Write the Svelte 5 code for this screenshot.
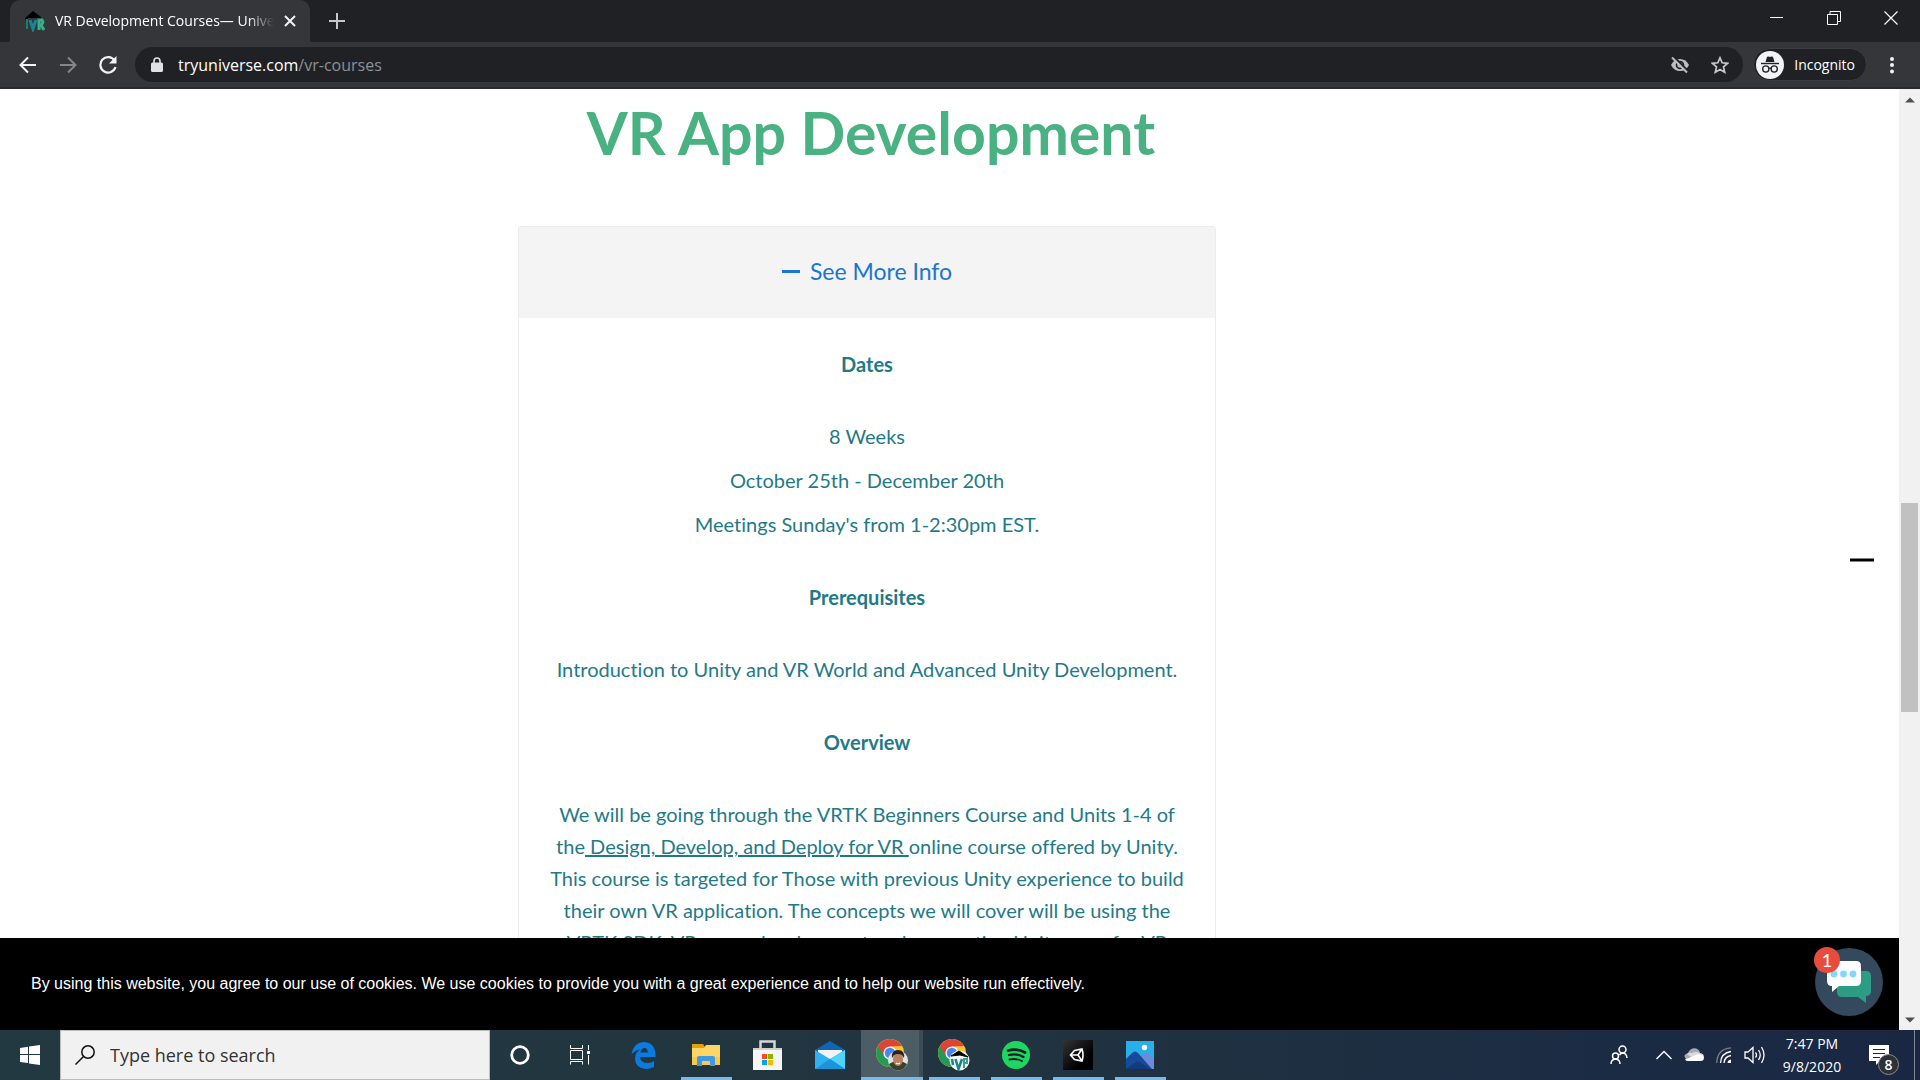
<script lang="ts">
	let infoOpen = $state(true);
	let query = $state('');

	const dates = ['8 Weeks', 'October 25th - December 20th', "Meetings Sunday's from 1-2:30pm EST."];

	// Pinned and running taskbar apps
	const apps = [
		{ name: 'Edge', running: false, active: false },
		{ name: 'File Explorer', running: true, active: false },
		{ name: 'Store', running: false, active: false },
		{ name: 'Mail', running: false, active: false },
		{ name: 'Chrome', running: true, active: true },
		{ name: 'Chrome VR', running: true, active: false },
		{ name: 'Spotify', running: true, active: false },
		{ name: 'Unity', running: true, active: false },
		{ name: 'Photos', running: true, active: false }
	];
</script>

{#snippet chromeLogo()}
	<circle cx="14" cy="14" r="14" fill="#fbc52f" />
	<path d="M1.9 7A14 14 0 0 0 14 28l6-10.500-6-3.500z" fill="#219b55" />
	<path d="M1.900 7 8 17.500 14 7.500 26.100 7A14 14 0 0 0 1.900 7z" fill="#db4437" />
	<circle cx="14" cy="14" r="6.600" fill="#f4f4f4" />
	<circle cx="14" cy="14" r="5.200" fill="#4687f4" />
{/snippet}

<div class="screen">
	<header class="browser">
		<div class="tabstrip">
			<div class="tab">
				<svg class="favicon" width="20" height="22" viewBox="0 0 20 22">
					<path d="M0 8 8 1l8 6v3H13V8H3v3H1z" fill="#000" />
					<path d="M2 9v10" stroke="#16806f" stroke-width="2" />
					<path d="M5 10l3 9 3-9" fill="none" stroke="#1c8296" stroke-width="3" />
					<path d="M14 20V10h3q2 3-1 5l3 5" fill="none" stroke="#35b183" stroke-width="3" />
				</svg>
				<span class="tab-title">VR Development Courses— Universe</span>
				<button class="plain" aria-label="Close tab">
					<svg width="12" height="12" viewBox="0 0 12 12"><path d="M1 1l10 10M11 1 1 11" stroke="#f1f3f4" stroke-width="2" /></svg>
				</button>
			</div>
			<button class="plain new-tab" aria-label="New tab">
				<svg width="16" height="16" viewBox="0 0 16 16"><path d="M8 0v16M0 8h16" stroke="#c5c8cb" stroke-width="2" /></svg>
			</button>
			<div class="window-buttons">
				<button class="plain" aria-label="Minimize">
					<svg width="14" height="14" viewBox="0 0 14 14"><path d="M0 6.500h13" stroke="#fff" /></svg>
				</button>
				<button class="plain" aria-label="Restore">
					<svg width="14" height="14" viewBox="0 0 14 14" fill="none" stroke="#fff"><path d="M.5 3.500h10v10H.5zM3 3V.5h10.500v10H11" /></svg>
				</button>
				<button class="plain" aria-label="Close">
					<svg width="14" height="14" viewBox="0 0 14 14"><path d="M.5.5l13 13M13.500.5l-13 13" stroke="#fff" stroke-width="1.200" /></svg>
				</button>
			</div>
		</div>

		<div class="toolbar">
			<nav class="nav-buttons">
				<button class="plain" aria-label="Back">
					<svg width="18" height="18" viewBox="0 0 18 18" fill="none" stroke="#f1f3f4" stroke-width="2"><path d="M17 9H2M9 1.500 1.500 9 9 16.500" /></svg>
				</button>
				<button class="plain" aria-label="Forward">
					<svg width="18" height="18" viewBox="0 0 18 18" fill="none" stroke="#84868a" stroke-width="2"><path d="M1 9h15M9 1.500 16.500 9 9 16.500" /></svg>
				</button>
				<button class="plain" aria-label="Reload">
					<svg width="18" height="18" viewBox="0 0 18 18"><path d="M15.500 4.500A7.700 7.700 0 1 0 16.500 11" fill="none" stroke="#f1f3f4" stroke-width="2.200" /><path d="M17.500 0v7.500H10z" fill="#f1f3f4" /></svg>
				</button>
			</nav>
			<div class="omnibox">
				<svg width="12" height="16" viewBox="0 0 12 16"><path d="M3 6V4a3 3 0 0 1 6 0v2" fill="none" stroke="#dfe1e5" stroke-width="1.600" /><rect x="0" y="5.500" width="12" height="9.500" rx="1.500" fill="#dfe1e5" /></svg>
				<span class="url">tryuniverse.com<span class="path">/vr-courses</span></span>
				<div class="page-actions">
					<button class="plain" aria-label="Third-party cookies blocked">
						<svg width="20" height="18" viewBox="0 0 20 18"><path d="M1 9Q4 3 10 3t9 6q-3 6-9 6T1 9z" fill="#bcbec1" /><circle cx="10" cy="9" r="4.300" fill="#202124" /><circle cx="10" cy="9" r="2.600" fill="#bcbec1" /><path d="M3.500.5l15 15" stroke="#202124" stroke-width="2" /><path d="M2 1.500l15 15" stroke="#bcbec1" stroke-width="2" /></svg>
					</button>
					<button class="plain" aria-label="Bookmark this page">
						<svg width="18" height="18" viewBox="0 0 18 18"><path d="M9 1.800l2.200 5 5.400.5-4.100 3.600 1.200 5.300L9 13.400l-4.700 2.800 1.200-5.300L1.400 7.300l5.400-.5z" fill="none" stroke="#c5c7ca" stroke-width="1.700" /></svg>
					</button>
				</div>
			</div>
			<button class="incognito">
				<svg width="28" height="28" viewBox="0 0 28 28">
					<circle cx="14" cy="14" r="14" fill="#f1f3f4" />
					<path d="M9.500 11l1.300-4.500q.5-1.300 1.700-.9l1.500.4 1.500-.4q1.200-.4 1.700.9l1.300 4.500z" fill="#202124" />
					<path d="M5 12.500h18" stroke="#202124" stroke-width="1.400" />
					<g fill="none" stroke="#202124" stroke-width="1.300"><circle cx="9.800" cy="18" r="3.100" /><circle cx="18.200" cy="18" r="3.100" /><path d="M12.800 17.500q1.200-.8 2.400 0" /></g>
				</svg>
				Incognito
			</button>
			<button class="plain menu" aria-label="Menu">
				<svg width="4" height="18" viewBox="0 0 4 18" fill="#f1f3f4"><circle cx="2" cy="3" r="2" /><circle cx="2" cy="9" r="2" /><circle cx="2" cy="15.500" r="2" /></svg>
			</button>
		</div>
	</header>

	<div class="viewport">
		<div class="page">
			<main>
				<div class="column">
					<h1>VR App Development</h1>
					<section class="card">
						<button class="toggle" aria-expanded={infoOpen} onclick={() => (infoOpen = !infoOpen)}>
							<span class="dash"></span>
							See More Info
						</button>
						{#if infoOpen}
							<div class="info">
								<h2>Dates</h2>
								{#each dates as line}
									<p>{line}</p>
								{/each}
								<h2>Prerequisites</h2>
								<p>Introduction to Unity and VR World and Advanced Unity Development.</p>
								<h2>Overview</h2>
								<p>
									We will be going through the VRTK Beginners Course and Units 1-4 of the<a href="#course">&nbsp;Design, Develop, and Deploy for VR&nbsp;</a>online course offered by Unity. This course is targeted for Those with previous Unity experience to build their own VR application. The concepts we will cover will be using the VRTK SDK, VR game development and connecting Unity apps for VR
								</p>
							</div>
						{/if}
					</section>
				</div>
			</main>

			<span class="side-marker"></span>

			<div class="cookies">
				By using this website, you agree to our use of cookies. We use cookies to provide you with a great experience and to help our website run effectively.
			</div>

			<button class="chat" aria-label="Open chat">
				<svg width="68" height="68" viewBox="0 0 68 68">
					<circle cx="34" cy="34" r="34" fill="#34495e" />
					<path d="M28 23h23q5 0 5 5v15q0 5-5 5v7l-8-6H27q-5 0-5-5V28z" fill="#2c9c84" />
					<path d="M16 13h25q5 0 5 5v15q0 5-5 5H24l-7 6v-6q-5 0-5-5V17z" fill="#fff" />
					<g fill="#81d8fd"><circle cx="19" cy="26" r="3.400" /><circle cx="28.500" cy="26" r="3.400" /><circle cx="38" cy="26" r="3.400" /></g>
				</svg>
				<span class="badge">1</span>
			</button>
		</div>

		<div class="scrollbar">
			<svg width="10" height="6" viewBox="0 0 10 6"><path d="M0 5.500 5 .5l5 5z" fill="#505050" /></svg>
			<div class="track"><div class="thumb"></div></div>
			<svg width="10" height="6" viewBox="0 0 10 6"><path d="M0 .5l5 5 5-5z" fill="#505050" /></svg>
		</div>
	</div>

	<footer class="taskbar">
		<button class="plain start" aria-label="Start">
			<svg width="20" height="20" viewBox="0 0 20 20" fill="#fff"><path d="M0 3l8-1.200V9H0zM9 1.600 20 0v9H9zM0 10h8v8L0 17zM9 10h11v10L9 18.400z" /></svg>
		</button>
		<label class="search">
			<svg width="20" height="20" viewBox="0 0 20 20" fill="none" stroke="#111" stroke-width="1.500"><circle cx="13" cy="7" r="6.200" /><path d="M8.500 11.500.5 19.500" /></svg>
			<input type="text" aria-label="Search" placeholder="Type here to search" bind:value={query} />
		</label>
		<button class="plain shell" aria-label="Cortana">
			<svg width="20" height="20" viewBox="0 0 20 20"><circle cx="10" cy="10" r="8.300" fill="none" stroke="#fff" stroke-width="2.800" /></svg>
		</button>
		<button class="plain shell" aria-label="Task View">
			<svg width="20" height="20" viewBox="0 0 20 20" fill="none" stroke="#fff"><path d="M.5 0v3.500h12V0M.5 5.500h12v9H.5zM.5 19.500v-3h12v3M18.500 0v5M18.500 10v9.500" /><path d="M17 6h3v3h-3z" fill="#fff" stroke="none" /></svg>
		</button>

		<div class="apps">
			{#each apps as app}
				<button class="plain app" class:running={app.running} class:active={app.active} aria-label={app.name}>
					{#if app.name === 'Edge'}
						<svg width="28" height="28" viewBox="0 0 28 28"><path d="M1.500 13Q4 1 14.500 1 26 2 25.500 16H10q.5 6 8 6 4 0 6-2v6q-4 2-8 2Q5 27 5 17.500 5 11 11 8q-5 1-9.500 5zM10.300 11.500h7.500Q17.500 7 14.500 7t-4.200 4.500z" fill="#0a7be0" /></svg>
					{:else if app.name === 'File Explorer'}
						<svg width="28" height="24" viewBox="0 0 28 24"><path d="M0 1h11l2 3v4H0z" fill="#dfa00b" /><path d="M0 5h12l2-3h14v20H0z" fill="#ffd564" /><path d="M0 14h28v8H0z" fill="#fbc94a" /><path d="M5 15q0-2 2-2h14q2 0 2 2v8h-5v-5h-8v5H5z" fill="#3d9be5" /></svg>
					{:else if app.name === 'Store'}
						<svg width="30" height="30" viewBox="0 0 30 30"><path d="M7.500 10V1.500h14V10" fill="none" stroke="#d6d6d8" stroke-width="2.500" /><path d="M0 8h29v22H0z" fill="#f5f5f5" /><path d="M0 8h29v2H0z" fill="#d4cfd0" /><path d="M9 14h5v5H9z" fill="#f25022" /><path d="M15 14h5v5h-5z" fill="#7fba00" /><path d="M9 20h5v5H9z" fill="#00a4ef" /><path d="M15 20h5v5h-5z" fill="#ffb900" /></svg>
					{:else if app.name === 'Mail'}
						<svg width="30" height="28" viewBox="0 0 30 28"><path d="M0 9 15 0l15 9v6H0z" fill="#0e65b5" /><path d="M3 9h24v11H3z" fill="#f3f3f3" /><path d="M0 9l15 9 15-9v19H0z" fill="#30b1ef" /><path d="M15 18 30 9v19z" fill="#50d4fc" /><path d="M0 28l15-10 15 10z" fill="#1c93dc" /></svg>
					{:else if app.name === 'Chrome'}
						<svg width="32" height="32" viewBox="0 0 32 32">
							{@render chromeLogo()}
							<circle cx="22" cy="21.500" r="10" fill="#e3e3df" />
							<path d="M13 25q4-3 9-3t9 3q-3 6.500-9 6.500T13 25z" fill="#37452f" />
							<ellipse cx="22" cy="20" rx="5" ry="7" fill="#b98264" />
							<path d="M16 19q-1-8 6-8t6 8l-2-3q-4-2-8 0z" fill="#2c211e" />
							<path d="M20 24q2 1.500 4 0" stroke="#fff" stroke-width="1.200" fill="none" />
						</svg>
					{:else if app.name === 'Chrome VR'}
						<svg width="32" height="32" viewBox="0 0 32 32">
							{@render chromeLogo()}
							<circle cx="21.500" cy="21.500" r="10" fill="#f6f8f8" />
							<path d="M13 17l8-5 9 6-4-1-4-1z" fill="#000" stroke="#000" />
							<path d="M14 20l1 6M17.500 20l3 10L24 20" fill="none" stroke="#18858b" stroke-width="2.500" />
							<path d="M26 29v-9h3v4h-3" fill="none" stroke="#35a48a" stroke-width="2" />
						</svg>
					{:else if app.name === 'Spotify'}
						<svg width="28" height="28" viewBox="0 0 28 28"><circle cx="14" cy="14" r="14" fill="#1ed760" /><g fill="none" stroke="#12202a" stroke-linecap="round"><path d="M6 9.500q9-2.500 17 2" stroke-width="2.800" /><path d="M7 14q8-2 14.500 2" stroke-width="2.300" /><path d="M7.500 18.500q7-1.500 12.500 1.500" stroke-width="1.900" /></g></svg>
					{:else if app.name === 'Unity'}
						<svg width="30" height="30" viewBox="0 0 30 30"><defs><linearGradient id="unity" x2="1" y2="1"><stop stop-color="#333" /><stop offset=".7" stop-color="#000" /></linearGradient></defs><path d="M0 0h30v30H0z" fill="url(#unity)" /><path d="M11.500 10.500 19 9q2 6 0 12l-7.500-1.500L7.500 15zM7.500 15H15l4-6M15 15l4 6" fill="none" stroke="#fff" stroke-width="1.600" /></svg>
					{:else}
						<svg width="28" height="28" viewBox="0 0 28 28"><path d="M0 0h28v28H0z" fill="#28b0e9" /><path d="M10 28V20l9-8q2-1 4 1l5 5v10z" fill="#6e8bd8" /><path d="M0 18l6-6q3-3 6 0l14 16H0z" fill="#174a98" /><path d="M0 28l10-7q2-1 4 0l10 7z" fill="#123b7e" /><circle cx="18.500" cy="6.500" r="2.700" fill="#fff" /></svg>
					{/if}
				</button>
			{/each}
		</div>

		<div class="tray">
			<button class="plain people" aria-label="People">
				<svg width="18" height="20" viewBox="0 0 18 20" fill="none" stroke="#fff" stroke-width="1.500"><circle cx="12.500" cy="4.500" r="3.500" /><circle cx="5.500" cy="11" r="3" /><path d="M1 19q0-4.500 4.500-5Q10 14.500 10 19M9.500 10q1.500-2 3-2 4 0 4.500 5" /></svg>
			</button>
			<button class="plain" aria-label="Show hidden icons">
				<svg width="16" height="10" viewBox="0 0 16 10"><path d="M.5 9 8 1.500 15.500 9" fill="none" stroke="#fff" stroke-width="1.400" /></svg>
			</button>
			<button class="plain" aria-label="OneDrive">
				<svg width="20" height="14" viewBox="0 0 20 14"><path d="M4 5q2-5 7-4.800 4 .8 5 4.300-5 3-7 6.500H2Q-2 7 4 5z" fill="#a6abb4" /><path d="M8 5q4-2 8 0 4 .5 4 4L10 11 3 6q2-2 5-1z" fill="#d7dade" /><path d="M1 11.500 13 6.500q4-1 7 3 0 3.500-3.500 3.500H4q-2 0-3-1.500z" fill="#fff" /></svg>
			</button>
			<button class="plain" aria-label="Network">
				<svg width="16" height="16" viewBox="0 0 16 16" fill="none" stroke-width="1.300"><path d="M.8 16Q1 2 15 .8" stroke="#78818f" /><path d="M4.500 16Q5 6 15 4.500M8 16q.5-6.500 7-7.500" stroke="#fff" /><path d="M11.500 16q0-3 3.500-3.500V16z" fill="#fff" /></svg>
			</button>
			<button class="plain" aria-label="Volume">
				<svg width="22" height="18" viewBox="0 0 22 18" fill="none" stroke="#fff" stroke-width="1.300"><path d="M1 6h3l5-4.500v15L4 12H1zM11.500 6.500q2 2.500 0 5M14.500 4q3.500 5 0 10M17.500 1q5 8 0 16" /></svg>
			</button>
			<div class="clock"><time>7:47 PM</time><time>9/8/2020</time></div>
			<button class="plain notices" aria-label="Notifications">
				<svg width="20" height="20" viewBox="0 0 20 20"><path d="M0 0h20v16h-9l-4 4v-4H0z" fill="#fff" /><path d="M4 4.500h12M4 8.500h12M4 12.500h7" stroke="#1b2944" /></svg>
				<span class="count">8</span>
			</button>
			<button class="plain desktop" aria-label="Show desktop"></button>
		</div>
	</footer>
</div>

<style>
	:global(body) {
		background: #fff;
	}

	.screen {
		height: 100vh;
		display: flex;
		flex-direction: column;
		overflow: hidden;
		font-family: 'Open Sans', 'Noto Sans', sans-serif;
	}

	.screen * {
		box-sizing: border-box;
	}

	svg {
		display: block;
		flex: none;
	}

	button {
		font-family: inherit;
		cursor: pointer;
	}

	.plain {
		display: flex;
		align-items: center;
		justify-content: center;
		padding: 0;
		border: 0;
		background: none;
	}

	/* Browser frame */
	.browser {
		flex: none;
		background: #35363a;
		border-bottom: 2px solid #28292c;
	}

	.tabstrip {
		display: flex;
		height: 42px;
		padding: 0 1px 0 10px;
		background: #202124;
	}

	.tab {
		display: flex;
		align-items: center;
		width: 300px;
		padding: 0 14px 0 15px;
		border-radius: 10px 10px 0 0;
		background: #35363a;
	}

	.tab-title {
		flex: 1;
		margin: 0 10px;
		padding-bottom: 2px;
		overflow: hidden;
		white-space: nowrap;
		font-size: 14px;
		color: #fff;
		mask-image: linear-gradient(to right, #000 88%, transparent);
	}

	.new-tab {
		width: 54px;
	}

	.window-buttons {
		display: flex;
		height: 36px;
		margin-left: auto;
	}

	.window-buttons button {
		width: 57px;
	}

	.toolbar {
		display: flex;
		align-items: center;
		height: 45px;
		padding-right: 3px;
	}

	.nav-buttons {
		display: flex;
		padding: 0 7px 0 8px;
	}

	.nav-buttons button {
		width: 40px;
		height: 36px;
	}

	.omnibox {
		flex: 1;
		display: flex;
		align-items: center;
		gap: 15px;
		height: 35px;
		padding: 0 14px 0 16px;
		border-radius: 18px;
		background: #202124;
	}

	.url {
		flex: 1;
		font-size: 16px;
		color: #fff;
	}

	.path {
		color: #8d9094;
	}

	.page-actions {
		display: flex;
		gap: 21px;
	}

	.incognito {
		display: flex;
		align-items: center;
		gap: 10px;
		height: 33px;
		margin-left: 10px;
		padding: 0 11px 0 2px;
		border: 1px solid #3c3d41;
		border-radius: 17px;
		background: #202124;
		color: #fff;
		font-size: 14px;
	}

	.menu {
		width: 50px;
		height: 36px;
	}

	/* Web page */
	.viewport {
		flex: 1;
		min-height: 0;
		display: flex;
	}

	.page {
		flex: 1;
		position: relative;
		overflow: hidden;
		font-family: Lato, sans-serif;
		font-variant-ligatures: none;
	}

	main {
		display: grid;
		grid-template-columns: 518fr 698fr 683fr;
	}

	.column {
		grid-column: 2;
		text-align: center;
	}

	h1 {
		margin: 0;
		padding: 8px 0 57px 8px;
		font-size: 59px;
		line-height: 72px;
		font-weight: 700;
		color: #49b182;
		white-space: nowrap;
	}

	.card {
		border: 1px solid #ececec;
		border-radius: 3px;
	}

	.toggle {
		display: flex;
		align-items: center;
		justify-content: center;
		gap: 10px;
		width: 100%;
		height: 91px;
		padding-bottom: 4px;
		border: 0;
		background: #f4f4f4;
		color: #1976d2;
		font-size: 23px;
	}

	.dash {
		width: 18px;
		height: 3px;
		background: #1976d2;
	}

	.info {
		padding: 30px 30px 0;
		color: #1f7a87;
		font-size: 20px;
		line-height: 32px;
	}

	.info h2 {
		margin: 0 0 40px;
		font-size: 20px;
		line-height: 32px;
		font-weight: 700;
	}

	.info p {
		margin: 0 0 12px;
	}

	.info p + h2 {
		margin-top: 41px;
	}

	.info a {
		color: inherit;
		text-decoration-thickness: 2px;
		text-underline-offset: 1px;
	}

	.side-marker {
		position: absolute;
		top: 50%;
		right: 25px;
		width: 24px;
		height: 3px;
		background: #000;
		transform: translateY(-50%);
	}

	.cookies {
		position: absolute;
		left: 0;
		right: 0;
		bottom: 0;
		padding: 34px 120px 34px 31px;
		background: #000;
		color: #fff;
		font-family: 'Liberation Sans', Arial, sans-serif;
		font-size: 16px;
		line-height: 24px;
	}

	.chat {
		position: absolute;
		right: 16px;
		bottom: 14px;
		padding: 0;
		border: 0;
		background: none;
	}

	.badge {
		position: absolute;
		top: -1px;
		left: -1px;
		width: 26px;
		height: 26px;
		border-radius: 50%;
		background: #e74c3c;
		color: #fff;
		font-size: 18px;
		line-height: 26px;
	}

	.scrollbar {
		flex: none;
		display: flex;
		flex-direction: column;
		align-items: center;
		gap: 7px;
		width: 21px;
		padding: 8px 0 7px;
		background: #f1f1f1;
	}

	.track {
		flex: 1;
		display: grid;
		grid-template-rows: 393fr 208fr 298fr;
	}

	.thumb {
		grid-row: 2;
		width: 17px;
		background: #c1c1c1;
	}

	/* Windows taskbar */
	.taskbar {
		flex: none;
		display: flex;
		height: 50px;
		background: linear-gradient(to right, #223941, #21343f 50%, #1c2c43 80%, #1a2743);
		color: #fff;
	}

	.start {
		width: 60px;
	}

	.search {
		display: flex;
		align-items: center;
		gap: 15px;
		width: 430px;
		padding: 0 14px;
		border: 1px solid #bcbcbc;
		background: #f1f1f1;
	}

	.search input {
		flex: 1;
		min-width: 0;
		padding: 0;
		border: 0;
		outline: 0;
		background: none;
		font-family: inherit;
		font-size: 18px;
		color: #222;
	}

	.search input::placeholder {
		color: #333;
		opacity: 1;
	}

	.shell {
		width: 60px;
	}

	.apps {
		display: flex;
		margin-left: 3px;
	}

	.app {
		position: relative;
		width: 62px;
	}

	.app.running::after {
		content: '';
		position: absolute;
		left: 6px;
		right: 5px;
		bottom: 0;
		height: 3px;
		background: #76b9ed;
	}

	.app.active {
		background: #4c5d66;
		box-shadow: inset -4px 0 #3d4c54;
	}

	.app.active::after {
		left: 0;
		right: 0;
	}

	.tray {
		display: flex;
		align-items: center;
		gap: 12px;
		margin-left: auto;
	}

	.people {
		margin-right: 16px;
	}

	.clock {
		display: flex;
		flex-direction: column;
		align-items: center;
		width: 68px;
		font-size: 14px;
		line-height: 23px;
	}

	.notices {
		position: relative;
		margin: 0 13px 0 11px;
	}

	.count {
		position: absolute;
		left: 9px;
		top: 9px;
		width: 21px;
		height: 21px;
		border: 1px solid #8a8d90;
		border-radius: 50%;
		background: #2d3034;
		font-size: 14px;
		font-weight: 600;
		line-height: 19px;
		color: #fff;
	}

	.desktop {
		align-self: stretch;
		width: 6px;
		border-left: 1px solid #808796;
	}
</style>
